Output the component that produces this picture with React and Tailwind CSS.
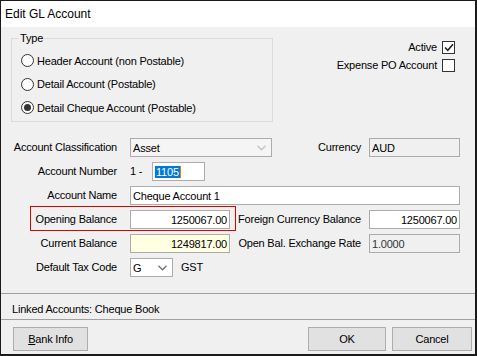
import React from "react";

function Chevron({ color = "#606060" }) {
  return (
    <svg width="9" height="6" viewBox="0 0 9 6" className="shrink-0">
      <polyline points="0.5,0.8 4.5,4.8 8.5,0.8" fill="none" stroke={color} strokeWidth="1.3" />
    </svg>
  );
}

function Radio({ checked, label }) {
  return (
    <div className="flex items-center h-[23.5px]">
      <div className="w-[13px] h-[13px] rounded-full border border-[#333333] bg-white flex items-center justify-center shrink-0">
        {checked && <div className="w-[7px] h-[7px] rounded-full bg-[#333333]" />}
      </div>
      <span className="ml-[3px]">{label}</span>
    </div>
  );
}

function Check({ checked, label }) {
  return (
    <div className="flex items-center h-[13px] gap-[5px]">
      <span>{label}</span>
      <div className="w-[13px] h-[13px] border border-[#333333] bg-white flex items-center justify-center">
        {checked && (
          <svg width="10" height="9" viewBox="0 0 10 9">
            <polyline points="1,4.5 3.8,7.3 9,1.2" fill="none" stroke="#222" strokeWidth="1.6" />
          </svg>
        )}
      </div>
    </div>
  );
}

function Label({ children }) {
  return <div className="w-[104px] mr-[13px] text-right shrink-0 whitespace-nowrap">{children}</div>;
}

function RightLabel({ children }) {
  return <div className="flex-1 text-right pr-[8px] whitespace-nowrap">{children}</div>;
}

function Box({ className = "", children }) {
  return (
    <div className={`h-[19px] border border-[#acacac] flex items-center leading-[14px] shrink-0 ${className}`}>
      {children}
    </div>
  );
}

export default function App() {
  return (
    <div className="w-[477px] h-[356px] border-t border-l border-r-2 border-b-2 border-[#1b1b1b] bg-[#f0f0f0] flex flex-col text-[11px] tracking-[-0.2px] text-black font-['Liberation_Sans',Arial,sans-serif] overflow-hidden">
      <div className="h-[26px] bg-white flex items-center pl-[4px] text-[12px] tracking-normal shrink-0">
        Edit GL Account
      </div>

      <div className="flex items-start shrink-0">
        <fieldset className="ml-[10px] mt-[4px] w-[262px] h-[91px] border border-[#dcdcdc]">
          <legend className="ml-[7px] px-[1px] leading-[14px]">Type</legend>
          <div className="flex flex-col pt-[4px] pl-[9px]">
            <Radio label="Header Account (non Postable)" />
            <Radio label="Detail Account (Postable)" />
            <Radio checked label="Detail Cheque Account (Postable)" />
          </div>
        </fieldset>
        <div className="flex-1 flex flex-col items-end gap-[5px] pr-[20px] mt-[14px]">
          <Check checked label="Active" />
          <Check label="Expense PO Account" />
        </div>
      </div>

      <div className="mt-[16px] flex flex-col gap-[5px] pl-[12px] pr-[15px] shrink-0">
        <div className="flex items-center h-[19px]">
          <Label>Account Classification</Label>
          <Box className="w-[142px] bg-[#f5f5f5] pl-[2px] pr-[5px] justify-between">
            <span>Asset</span>
            <Chevron color="#c4c4c4" />
          </Box>
          <RightLabel>Currency</RightLabel>
          <Box className="w-[91px] bg-[#f0f0f0] pl-[2px]">AUD</Box>
        </div>

        <div className="flex items-center h-[19px]">
          <Label>Account Number</Label>
          <span className="w-[22px]">1 -</span>
          <Box className="w-[53px] bg-white pl-[2px]">
            <span className="bg-[#0078d7] text-white px-[1px] leading-[12px]">1105</span>
            <span className="w-[1px] h-[12px] bg-[#e8781c]" />
          </Box>
        </div>

        <div className="flex items-center h-[19px]">
          <Label>Account Name</Label>
          <Box className="flex-1 bg-white pl-[2px]">Cheque Account 1</Box>
        </div>

        <div className="relative flex items-center h-[19px]">
          <div className="absolute left-[17px] top-[-4px] w-[206px] h-[25px] border border-[#e00000] pointer-events-none" />
          <Label>Opening Balance</Label>
          <Box className="w-[100px] bg-white justify-end pr-[2px]">1250067.00</Box>
          <RightLabel>Foreign Currency Balance</RightLabel>
          <Box className="w-[91px] bg-white justify-end pr-[2px]">1250067.00</Box>
        </div>

        <div className="flex items-center h-[19px]">
          <Label>Current Balance</Label>
          <Box className="w-[100px] bg-[#ffffe1] justify-end pr-[2px]">1249817.00</Box>
          <RightLabel>Open Bal. Exchange Rate</RightLabel>
          <Box className="w-[91px] bg-[#f0f0f0] pl-[2px] text-[#333]">1.0000</Box>
        </div>

        <div className="flex items-center h-[19px]">
          <Label>Default Tax Code</Label>
          <Box className="w-[43px] bg-white pl-[2px] pr-[5px] justify-between">
            <span>G</span>
            <Chevron color="#707070" />
          </Box>
          <span className="ml-[8px]">GST</span>
        </div>
      </div>

      <div className="mt-[16px] border-t border-b border-[#a0a0a0] h-[27px] pl-[11px] pt-[8px] leading-[14px] shrink-0">
        Linked Accounts: Cheque Book
      </div>

      <div className="flex items-start pt-[7px] pl-[12px] pr-[3px] shrink-0">
        <button className="w-[75px] h-[24px] bg-[#e1e1e1] border border-[#adadad] text-[11px] tracking-[-0.2px]">
          <span className="underline">B</span>ank Info
        </button>
        <button className="ml-auto w-[78px] h-[24px] bg-[#e1e1e1] border border-[#adadad] text-[11px] tracking-[-0.2px]">
          OK
        </button>
        <button className="ml-[6px] w-[80px] h-[24px] bg-[#e1e1e1] border border-[#adadad] text-[11px] tracking-[-0.2px]">
          Cancel
        </button>
      </div>
    </div>
  );
}
